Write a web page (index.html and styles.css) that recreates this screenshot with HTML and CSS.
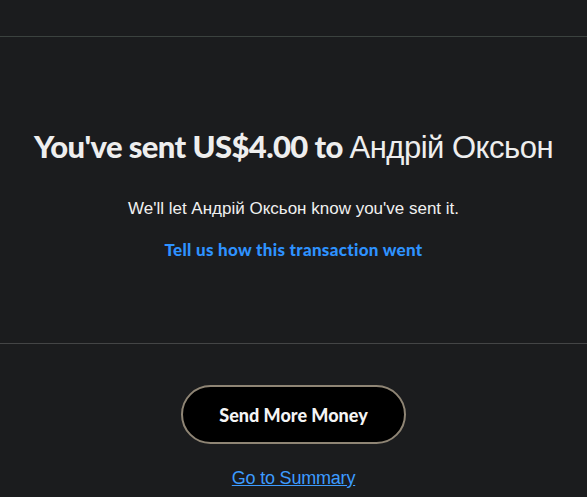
FILE: index.html
```html
<!DOCTYPE html>
<html>
<head>
<meta charset="utf-8">
<link rel="stylesheet" href="styles.css">
</head>
<body>
<div class="top"></div>
<section class="main">
  <h1 class="title">You've sent US$4.00 to <span class="name">Андрій Оксьон</span></h1>
  <p class="note">We'll let <span class="name-s">Андрій Оксьон</span> know you've sent it.</p>
  <a class="feedback" href="#">Tell us how this transaction went</a>
</section>
<section class="actions">
  <button class="send">Send More Money</button>
  <a class="summary" href="#">Go to Summary</a>
</section>
</body>
</html>
```
FILE: styles.css
```css
html, body {
  margin: 0;
  padding: 0;
  background: #1b1c1e;
  color: #ececec;
  font-family: "Lato", "Liberation Sans", sans-serif;
}
.top {
  height: 36px;
  border-bottom: 1px solid #3b423f;
}
.main {
  height: 307px;
  border-bottom: 1px solid #444546;
  display: flex;
  flex-direction: column;
  align-items: center;
  box-sizing: border-box;
  padding-top: 89px;
}
.title {
  margin: 0;
  font-size: 31px;
  font-weight: 900;
  letter-spacing: -0.6px;
  line-height: 40px;
  color: #eeeeee;
}
.name {
  font-family: "Liberation Sans", sans-serif;
  font-weight: 400;
  letter-spacing: -0.5px;
}
.note {
  margin: 31px 0 0;
  font-family: "Liberation Sans", sans-serif;
  font-size: 17px;
  letter-spacing: 0;
  line-height: 20px;
  color: #f0f0f0;
}
.feedback {
  margin-top: 20px;
  font-size: 17px;
  font-weight: 900;
  letter-spacing: 0.3px;
  color: #2e92ff;
  text-decoration: none;
}
.actions {
  display: flex;
  flex-direction: column;
  align-items: center;
  padding-top: 41px;
}
.send {
  width: 225px;
  height: 59px;
  border-radius: 30px;
  border: 2px solid #8f8575;
  background: #000;
  color: #f4f4f4;
  font-family: "Lato", sans-serif;
  font-size: 18px;
  font-weight: 900;
  letter-spacing: 0;
  cursor: pointer;
}
.summary {
  margin-top: 24px;
  font-family: "Liberation Sans", sans-serif;
  font-size: 18px;
  color: #3d9bff;
  text-decoration: underline;
  letter-spacing: -0.2px;
}
```
